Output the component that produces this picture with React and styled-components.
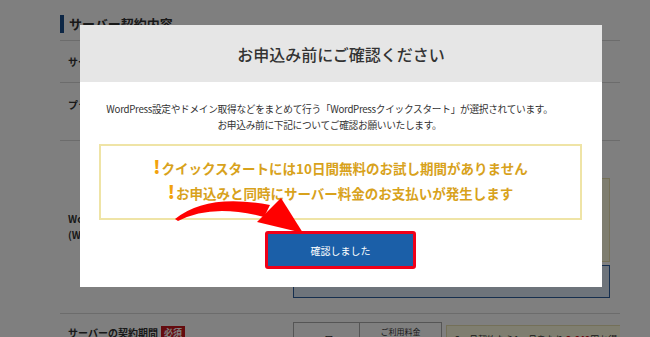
import React from 'react';
import styled, { createGlobalStyle } from 'styled-components';

const GlobalStyle = createGlobalStyle`
  html, body {
    margin: 0;
    padding: 0;
    background: #fff;
  }
  body {
    font-family: "Noto Sans CJK JP", "Noto Sans", sans-serif;
    color: #333;
    overflow: hidden;
  }
`;

const SPage = styled.div`
  width: 620px;
  height: 337px;
  box-sizing: border-box;
  padding: 15px 0 0 60px;
  overflow: hidden;
`;

const SHeading = styled.div`
  height: 25px;
  border-bottom: 1px solid #d8d8d8;
`;

const SHeadingText = styled.h2`
  margin: 0;
  height: 18px;
  line-height: 18px;
  border-left: 4px solid #1b4f8c;
  padding-left: 5px;
  font-size: 13px;
  font-weight: bold;
`;

const SRow = styled.div`
  display: grid;
  grid-template-columns: 233px 1fr;
  height: ${props => props.$h}px;
  border-bottom: 1px solid #d8d8d8;
  align-items: ${props => props.$align || 'center'};
`;

const SLabel = styled.div`
  padding: ${props => props.$pt || 0}px 0 0 8px;
  font-size: 10px;
  font-weight: bold;
  line-height: 16px;
  display: flex;
  align-items: center;
  gap: 3px;
`;

const SBadge = styled.span`
  background: #c8161d;
  color: #fff;
  font-size: 9px;
  padding: 0 3px;
  line-height: 14px;
`;

const SRight = styled.div`
  display: flex;
  flex-direction: column;
  gap: 3px;
  padding: 37px 10px 0 0;
  align-self: start;
`;

const SNoteBox = styled.div`
  height: 84px;
  box-sizing: border-box;
  background: #fffde0;
  border: 1px solid #e8e0b0;
`;

const SSelectBox = styled.div`
  height: 33px;
  box-sizing: border-box;
  background: #dce9f7;
  border: 1px solid #2a5d9c;
`;

const SPeriod = styled.div`
  display: flex;
  gap: 4px;
  padding: 8px 12px 0 0;
  align-self: start;
`;

const STable = styled.div`
  display: grid;
  grid-template-columns: 65px 82px;
  border: 1px solid #aaa;
  height: 30px;
`;

const SCell = styled.div`
  font-size: ${props => props.$small ? 8 : 11}px;
  padding: ${props => props.$small ? '3px 0 0' : '9px 0 0 6px'};
  text-align: ${props => props.$small ? 'center' : 'left'};
  border-left: ${props => props.$first ? 'none' : '1px solid #aaa'};
  white-space: nowrap;
`;

const SPromo = styled.div`
  flex: 1;
  margin-top: 3px;
  background: #fffde0;
  border: 1px solid #e8e0b0;
  font-size: 9px;
  padding: 7px 0 0 8px;
  height: 30px;
  white-space: nowrap;
  overflow: hidden;
  strong { color: #d0101a; }
`;

const SOverlay = styled.div`
  position: fixed;
  inset: 0;
  background: rgba(0, 0, 0, 0.5);
  display: flex;
  justify-content: center;
  align-items: flex-start;
  padding: 25px 0 0 32px;
`;

const SModal = styled.div`
  width: 522px;
  background: #fff;
  display: flex;
  flex-direction: column;
`;

const SModalHeader = styled.div`
  height: 57px;
  background: #e6e6e6;
  display: flex;
  align-items: center;
  justify-content: center;
  font-size: 16px;
  font-weight: 500;
  color: #333;
`;

const SModalBody = styled.div`
  padding: 19px 20px 18px 19px;
  display: flex;
  flex-direction: column;
  align-items: center;
`;

const SDesc = styled.p`
  margin: 0;
  align-self: stretch;
  height: 32px;
  text-align: center;
  font-size: 9.7px;
  letter-spacing: -0.3px;
  line-height: 16px;
  padding-right: 22px;
  white-space: nowrap;
  color: #333;
`;

const SWarnBox = styled.div`
  align-self: stretch;
  margin-top: 11px;
  height: 76px;
  box-sizing: border-box;
  border: 2px solid #efe4a6;
  padding: 10px 0 0;
  text-align: center;
`;

const SWarn = styled.div`
  height: 25px;
  font-size: 13.5px;
  font-weight: bold;
  line-height: 25px;
  color: #d8a21c;
  overflow: visible;
`;

const SBang = styled.span`
  font-size: 18px;
  line-height: 0;
  font-weight: 900;
  color: #f2a20c;
  margin-right: 1px;
`;

const SButtonFrame = styled.div`
  margin-top: 11px;
  border: 3px solid #f00018;
  border-radius: 3px;
`;

const SButton = styled.button`
  display: block;
  width: 145px;
  height: 32px;
  border: none;
  background: #1b5fa8;
  color: #fff;
  font-family: inherit;
  font-size: 10px;
  cursor: pointer;
`;

const SArrow = styled.svg`
  position: absolute;
  left: 0;
  top: 0;
  pointer-events: none;
`;

class App extends React.Component {
  render() {
    return (
      <>
        <GlobalStyle />
        <SPage>
          <SHeading>
            <SHeadingText>サーバー契約内容</SHeadingText>
          </SHeading>
          <SRow $h={41}>
            <SLabel>サーバーID</SLabel>
          </SRow>
          <SRow $h={57} $align="start">
            <SLabel $pt={14}>プラン</SLabel>
          </SRow>
          <SRow $h={172}>
            <SLabel>WordPressクイックスタート<br />(WordPress簡単インストール)</SLabel>
            <SRight>
              <SNoteBox />
              <SSelectBox />
            </SRight>
          </SRow>
          <SRow $h={60} $align="start">
            <SLabel $pt={11}>サーバーの契約期間<SBadge>必須</SBadge></SLabel>
            <SPeriod>
              <STable>
                <SCell $first>12ヶ月</SCell>
                <SCell $small>ご利用料金</SCell>
              </STable>
              <SPromo>3ヶ月契約なら1ヶ月あたり <strong>2,640</strong>円お得！</SPromo>
            </SPeriod>
          </SRow>
        </SPage>

        <SOverlay>
          <SModal>
            <SModalHeader>お申込み前にご確認ください</SModalHeader>
            <SModalBody>
              <SDesc>
                WordPress設定やドメイン取得などをまとめて行う「WordPressクイックスタート」が選択されています。<br />
                お申込み前に下記についてご確認お願いいたします。
              </SDesc>
              <SWarnBox>
                <SWarn><SBang>!</SBang>クイックスタートには10日間無料のお試し期間がありません</SWarn>
                <SWarn><SBang>!</SBang>お申込みと同時にサーバー料金のお支払いが発生します</SWarn>
              </SWarnBox>
              <SButtonFrame>
                <SButton>確認しました</SButton>
              </SButtonFrame>
            </SModalBody>
          </SModal>
          <SArrow width="650" height="337" viewBox="0 0 650 337">
            <path d="M175 219 Q207 193 270 205 L264 217 Q212 203 178 221 Z" fill="#f00" />
            <polygon points="281,198 303,233 257,222" fill="#f00" />
          </SArrow>
        </SOverlay>
      </>
    );
  }
};

export default App;
